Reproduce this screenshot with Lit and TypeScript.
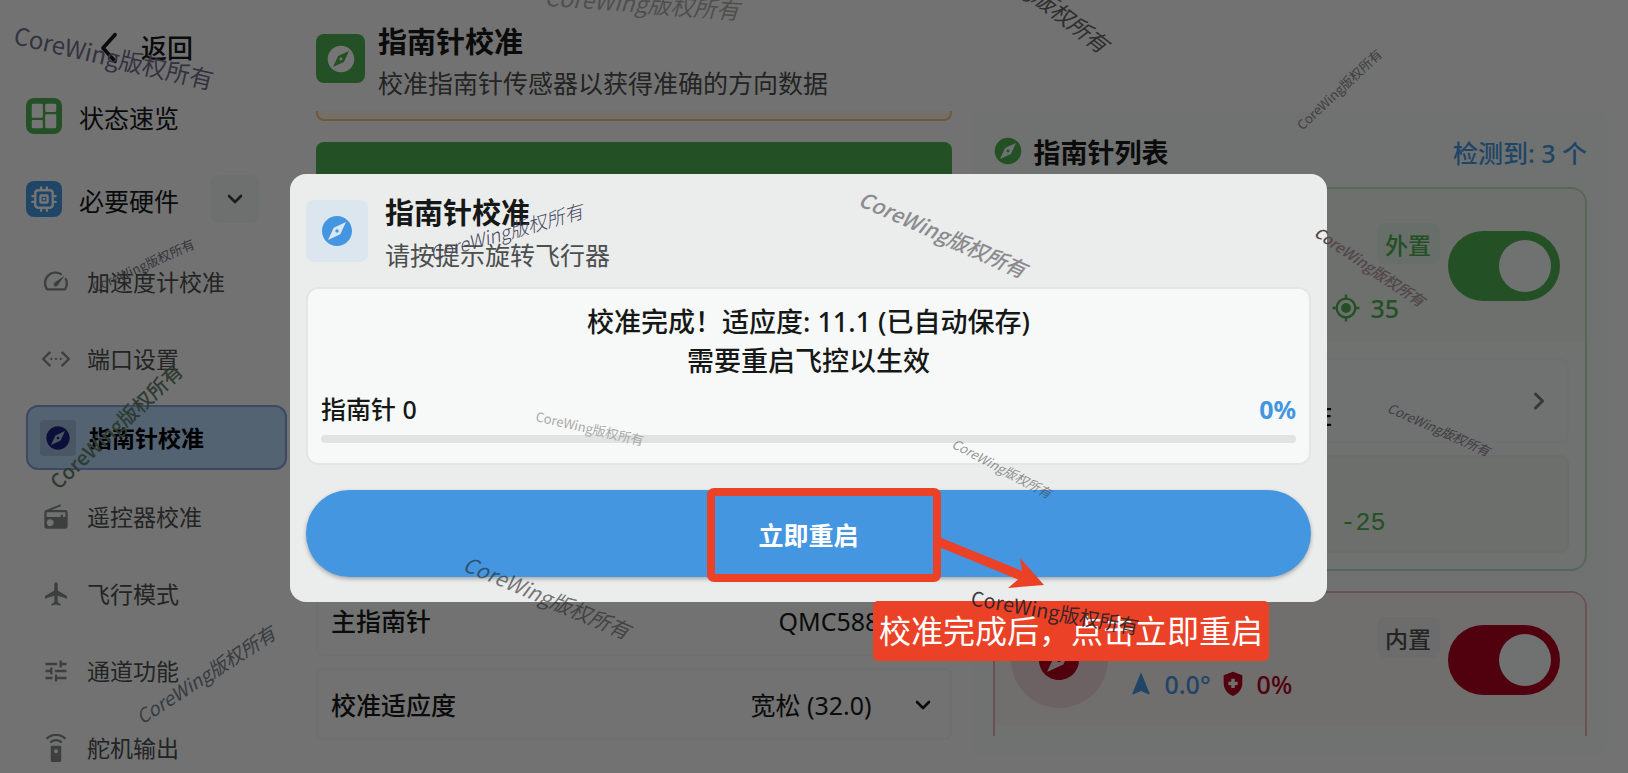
import { LitElement, html, css, svg, nothing } from "lit";
import { customElement } from "lit/decorators.js";
import { styleMap } from "lit/directives/style-map.js";

const glyphs = {
  compass: svg`<path fill-rule="evenodd" d="M12 10.9c-.61 0-1.1.49-1.1 1.1s.49 1.1 1.1 1.1 1.1-.49 1.1-1.1-.49-1.1-1.1-1.1zM12 2C6.48 2 2 6.48 2 12s4.48 10 10 10 10-4.48 10-10S17.52 2 12 2zm2.19 12.19L6 18l3.81-8.19L18 6l-3.81 8.19z"/>`,
  dashboard: svg`<rect x="1.5" y="1.5" width="9.5" height="12" rx="1"/><rect x="1.5" y="15.5" width="9.5" height="7" rx="1"/><rect x="13" y="1.5" width="9.5" height="7" rx="1"/><rect x="13" y="10.5" width="9.5" height="12" rx="1"/>`,
  chip: svg`<g fill="none" stroke="currentColor" stroke-width="2" stroke-linecap="round"><rect x="4.5" y="4.5" width="15" height="15" rx="2.5"/><rect x="9" y="9" width="6" height="6" rx=".5"/><path d="M9.5 4V2M14.5 4V2M9.5 22v-2M14.5 22v-2M4 9.500H2M4 14.500H2M22 9.500h-2M22 14.500h-2"/></g><rect x="11" y="11" width="2" height="2"/>`,
  gauge: svg`<g fill="none" stroke="currentColor" stroke-width="2" stroke-linecap="round" stroke-linejoin="round"><path d="M16.200 5.200A9 9 0 0 0 3.900 17.600c.3.500.6.700 1.100.7h14c.5 0 .8-.2 1.100-.7a9 9 0 0 0 .3-8.100"/></g><path d="M19.500 6.500l-6 8.500c-.8 1.200-2.300 1.100-3 .4s-.8-2.200.4-3z"/>`,
  ports: svg`<g fill="none" stroke="currentColor" stroke-width="2" stroke-linecap="round" stroke-linejoin="round"><path d="M6.500 6.500L1 12l5.500 5.500M17.500 6.500L23 12l-5.500 5.500"/></g><circle cx="8" cy="12" r="1"/><circle cx="12" cy="12" r="1"/><circle cx="16" cy="12" r="1"/>`,
  radio: svg`<path fill-rule="evenodd" d="M3.240 6.150C2.510 6.430 2 7.170 2 8v12c0 1.100.89 2 2 2h16c1.110 0 2-.9 2-2V8c0-1.110-.89-2-2-2H8.300l8.260-3.340L15.880 1 3.240 6.150zM7 20c-1.660 0-3-1.340-3-3s1.340-3 3-3 3 1.340 3 3-1.340 3-3 3zm13-8h-2v-2h-2v2H4V8h16v4z"/>`,
  plane: svg`<path d="M21.500 16v-1.500a1 1 0 0 0-.5-.9L13.500 9V3.500a1.500 1.500 0 0 0-3 0V9L3 13.600a1 1 0 0 0-.5.9V16l8-2.500V19l-2.300 1.500V22l3.800-1 3.800 1v-1.500L13.500 19v-5.500z"/>`,
  tune: svg`<path d="M3 17v2h6v-2H3zM3 5v2h10V5H3zm10 16v-2h8v-2h-8v-2h-2v6h2zM7 9v2H3v2h4v2h2V9H7zm14 4v-2H11v2h10zm-6-4h2V7h4V5h-4V3h-2v6z"/>`,
  remote: svg`<path fill-rule="evenodd" d="M15.500 10h-7c-.55 0-1 .45-1 1v12c0 .55.45 1 1 1h7c.55 0 1-.45 1-1V11c0-.55-.45-1-1-1zM12 16.500a1.700 1.700 0 1 1 0-3.400 1.700 1.700 0 0 1 0 3.400z"/><g fill="none" stroke="currentColor" stroke-width="2" stroke-linecap="round"><path d="M4.500 3.500C8.500-.2 15.500-.2 19.500 3.500M7.800 6.800c2.200-2.100 6.200-2.100 8.400 0"/></g>`,
  down: svg`<path d="M6 9l6 6 6-6" fill="none" stroke="currentColor" stroke-width="2.600" stroke-linecap="round" stroke-linejoin="round"/>`,
  right: svg`<path d="M9 6l6 6-6 6" fill="none" stroke="currentColor" stroke-width="2.600" stroke-linecap="round" stroke-linejoin="round"/>`,
  back: svg`<path d="M16.500 2L7.500 12l9 10" fill="none" stroke="currentColor" stroke-width="2.800" stroke-linecap="round" stroke-linejoin="round"/>`,
  target: svg`<g fill="none" stroke="currentColor" stroke-width="2"><circle cx="12" cy="12" r="8"/><path d="M12 0.500v3.500M12 20v3.500M.5 12H4M20 12h3.500"/></g><circle cx="12" cy="12" r="4.200"/>`,
  heading: svg`<path d="M12 2L4.500 20.290l.71.71L12 18l6.790 3 .71-.71z"/>`,
  shield: svg`<path fill-rule="evenodd" d="M12 1.500L4 4.500v6.500c0 5.300 3.400 9.900 8 11.200 4.600-1.300 8-5.900 8-11.200V4.500L12 1.500zM10.500 7.500h3V10H16v3h-2.500v2.500h-3V13H8v-3h2.500z"/>`,
};

const icon = (name: keyof typeof glyphs, cls: string) => html`
  <svg class="icon ${cls}" viewBox="0 0 24 24" fill="currentColor" aria-hidden="true">${glyphs[name]}</svg>`;

const subItems: { label: string; glyph: keyof typeof glyphs; active?: boolean }[] = [
  { label: "加速度计校准", glyph: "gauge" },
  { label: "端口设置", glyph: "ports" },
  { label: "指南针校准", glyph: "compass", active: true },
  { label: "遥控器校准", glyph: "radio" },
  { label: "飞行模式", glyph: "plane" },
  { label: "通道功能", glyph: "tune" },
  { label: "舵机输出", glyph: "remote" },
];

/* Copyright stamps scattered over the page: centre, angle, size, ink. */
const stamps = [
  { x: 114, y: 57, a: 13, s: 24, c: "#33333f", i: false, w: 400 },
  { x: 642, y: 3, a: 4, s: 23, c: "#4f4f4f", i: true, w: 400 },
  { x: 1033, y: -11, a: 38, s: 22, c: "#2e2e2e", i: true, w: 400 },
  { x: 1339, y: 89, a: -43, s: 13, c: "#3f3f3f", i: false, w: 400 },
  { x: 143, y: 265, a: -24, s: 13, c: "#35353b", i: false, w: 400 },
  { x: 116, y: 426, a: -43, s: 20, c: "#2e3b31", i: false, w: 500 },
  { x: 205, y: 674, a: -33, s: 19, c: "#363c40", i: true, w: 400 },
  { x: 506, y: 231, a: -16, s: 19, c: "#45455c", i: true, w: 300 },
  { x: 943, y: 234, a: 24, s: 21, c: "#8b8b8f", i: true, w: 500 },
  { x: 1370, y: 266, a: 34, s: 15, c: "#52464b", i: true, w: 500 },
  { x: 1439, y: 429, a: 24, s: 13, c: "#403c42", i: true, w: 400 },
  { x: 590, y: 428, a: 13, s: 13, c: "#a9a9a9", i: false, w: 400 },
  { x: 1002, y: 468, a: 28, s: 13, c: "rgba(60,60,60,.55)", i: true, w: 400 },
  { x: 547, y: 597, a: 23, s: 21, c: "rgba(35,35,35,.6)", i: true, w: 400 },
  { x: 1055, y: 612, a: 10, s: 20, c: "rgba(30,35,40,.9)", i: false, w: 400 },
];

@customElement("app-root")
export class AppRoot extends LitElement {
  static styles = css`
    :host {
      --blue: #4496e0;
      --green: #4caf50;
      --red: #b00020;
      --ink: #161817;
      --muted: #4c4f4e;
      display: block;
      position: relative;
      height: 100vh;
      overflow: hidden;
      background: #f8f9f9;
      color: var(--ink);
      font: 400 25px/36px "Noto Sans", "Noto Sans CJK SC", sans-serif;
    }
    * { box-sizing: border-box; }
    h1, h2, h3, p, ul { margin: 0; padding: 0; }
    ul { list-style: none; }
    button, select { font: inherit; color: inherit; border: 0; background: none; padding: 0; margin: 0; }
    a { color: inherit; text-decoration: none; }
    .icon { display: block; flex: none; }
    .i24 { width: 24px; height: 24px; }
    .i28 { width: 28px; height: 28px; }
    .i32 { width: 32px; height: 32px; }
    .i36 { width: 36px; height: 36px; }
    .i48 { width: 48px; height: 48px; }

    .app { display: grid; grid-template: minmax(0, 1fr) / 289px minmax(0, 1fr); height: 100%; }

    .side { padding: 24px 2px 0 26px; display: flex; flex-direction: column; overflow: hidden; }
    .side > * { flex: none; }
    .back { display: flex; align-items: center; gap: 16px; height: 48px; padding-left: 67px; font-size: 26px; font-weight: 500; }
    .group { display: flex; align-items: center; gap: 17px; height: 48px; margin-top: 20px; }
    .group + .group { margin-top: 35px; }
    .group a { flex: 1; padding-top: 4px; }
    .tile { display: grid; place-items: center; flex: none; width: 36px; height: 36px; border-radius: 8px; color: #fff; }
    .tile.green { background: var(--green); }
    .tile.blue { background: var(--blue); }
    .fold { display: grid; place-items: center; width: 49px; height: 48px; margin-right: 28px; border-radius: 8px; background: #f0f1f1; color: #3c3f3e; }
    .subs { display: flex; flex-direction: column; gap: 16px; margin-top: 28px; }
    .sub { display: flex; align-items: center; gap: 17px; height: 61px; padding-left: 16px; font-size: 23px; color: var(--muted); }
    .sub .icon { color: #868988; }
    .sub.active { height: 65px; padding-left: 12px; gap: 13px; border: 2px solid #7ea2d6; border-radius: 12px; background: #b5d7f8; color: #000; font-weight: 700; }
    .sub.active .tile { border-radius: 4px; background: #a3bbd9; }
    .sub.active .icon { color: #1a237e; }

    .main { display: flex; flex-direction: column; min-width: 0; min-height: 0; padding: 0 21px 0 27px; }
    .head { display: flex; gap: 13px; height: 111px; padding-top: 23px; flex: none; }
    .head .tile { width: 49px; height: 49px; margin-top: 11px; }
    h1, h2 { font-size: 29px; line-height: 38px; font-weight: 700; }
    .lead { color: var(--muted); line-height: 44px; }
    .cols { flex: 1; min-height: 0; display: grid; grid-template: minmax(0, 1fr) / 1fr 1fr; gap: 20px; }

    .left { display: flex; flex-direction: column; justify-content: space-between; padding-bottom: 33px; }
    .notice { height: 10px; border: 2px solid #f3c37f; border-top: 0; border-radius: 0 0 8px 8px; background: #fdf1e0; }
    .start { width: 100%; height: 84px; margin-top: 21px; border-radius: 8px; background: var(--green); color: #fff; display: block; }
    .fields { display: flex; flex-direction: column; gap: 12px; }
    .field { display: flex; align-items: center; justify-content: space-between; height: 72px; padding: 2px 0 0 13px; border: 2px solid #f1f2f2; border-radius: 8px; position: relative; }
    .field label { font-weight: 500; }
    .field select { appearance: none; height: 44px; padding-right: 77px; }
    .field select.model { padding-right: 42px; }
    .field .icon { position: absolute; right: 15px; pointer-events: none; }

    .panel { display: flex; flex-direction: column; min-height: 0; margin-bottom: 17px; padding: 0 20px 20px 21px; border-radius: 10px; background: #f5f6f6; }
    .bar { display: flex; align-items: center; gap: 10px; height: 76px; padding-top: 7px; flex: none; }
    .bar .icon { color: var(--green); margin-left: -1px; margin-top: -4px; }
    h3 { flex: 1; font-size: 27px; font-weight: 700; }
    .found { color: var(--blue); font-weight: 500; }
    .cards { flex: 1; min-height: 0; overflow: hidden; display: flex; flex-direction: column; gap: 20px; }
    .card { flex: none; height: 384px; border: 2px solid; border-radius: 16px; overflow: hidden; }
    .card.ok { border-color: #c0dfc2; color: var(--green); }
    .card.bad { border-color: #e3b3bc; color: var(--red); }
    .unit { display: flex; align-items: center; gap: 8px; padding: 0 25px 0 16px; }
    .ok .unit { height: 153px; background: #edf3ed; }
    .bad .unit { height: 133px; background: #f7efef; }
    .avatar { display: grid; place-items: center; flex: none; width: 97px; height: 97px; margin-right: 11px; border-radius: 50%; background: #ecd5d8; }
    .info { flex: 1; align-self: flex-start; display: flex; flex-direction: column; padding-top: 24px; gap: 12px; }
    .ok .info { padding-top: 34px; gap: 30px; }
    .badge { align-self: flex-end; height: 41px; padding: 0 9px 0 8px; border-radius: 8px; font-size: 23px; line-height: 44px; font-weight: 500; }
    .ok .badge { color: var(--green); background: #e3efe4; }
    .bad .badge { background: #ebebeb; color: var(--muted); }
    .stats { display: flex; align-items: center; height: 28px; gap: 10px; font-weight: 500; }
    .stats .blue { color: var(--blue); }
    .stats .gap { margin-left: -2px; }
    .ok .stats { justify-content: flex-end; padding-right: 41px; }
    .switch { appearance: none; display: flex; align-items: center; justify-content: flex-end; flex: none; width: 112px; height: 70px; margin: 0; padding-right: 9px; border-radius: 35px; background: var(--green); }
    .bad .switch { background: var(--red); }
    .switch::before { content: ""; width: 52px; height: 52px; border-radius: 50%; background: #f5f6f6; }
    .rows { display: flex; flex-direction: column; gap: 12px; padding: 16px 16px 0; }
    .row { display: flex; align-items: center; justify-content: space-between; height: 85px; padding: 0 14px 0 306px; border: 2px solid #f0f1f1; border-radius: 8px; color: #777a79; }
    .row b { padding-top: 30px; color: #000; font-weight: 500; }
    .row.value { height: 98px; padding-top: 40px; background: #ecf2ec; border-color: #e8efe8; color: var(--green); font-family: "Liberation Mono", monospace; }
    .row.value span { margin-left: 22px; }

    .scrim { position: absolute; inset: 0; background: rgba(0, 0, 0, .54); display: grid; align-items: start; padding: 174px 301px 0 290px; }
    .dialog { padding: 26px 16px 25px; border-radius: 16px; background: #ebedec; }
    .top { display: flex; gap: 17px; height: 87px; }
    .top .tile { width: 62px; height: 62px; background: #dbe6ee; color: var(--blue); }
    .top h2, .top .lead { line-height: 42px; }
    .words { margin-top: -8px; }
    .result { height: 178px; padding: 13px 13px 0; border: 2px solid #e4e6e5; border-radius: 12px; background: #f7f9f8; }
    .done { text-align: center; font-size: 27px; line-height: 39px; font-weight: 500; }
    .progress { display: flex; justify-content: space-between; margin-top: 11px; padding-bottom: 8px; line-height: 36px; font-weight: 500; }
    .progress b { color: var(--blue); font-weight: 700; }
    .track { appearance: none; display: block; width: 100%; height: 8px; border: 0; border-radius: 4px; background: #e1e3e2; overflow: hidden; }
    .track::-webkit-progress-bar { background: #e1e3e2; }
    .track::-webkit-progress-value { background: var(--blue); }
    .restart { display: block; width: 100%; height: 87px; margin-top: 25px; padding-top: 2px; border-radius: 44px; background: var(--blue); color: #fff; font-weight: 700; box-shadow: 0 2px 4px rgba(0, 0, 0, .3); }

    .frame { position: absolute; left: 707px; top: 488px; width: 234px; height: 94px; border: 8px solid #eb4127; border-radius: 7px; pointer-events: none; }
    .arrow { position: absolute; left: 936px; top: 530px; width: 110px; height: 62px; pointer-events: none; }
    .tip { position: absolute; left: 873px; top: 601px; padding: 6px; border-radius: 5px; background: #eb4127; color: #fff; font-size: 32px; line-height: 48px; white-space: nowrap; }
    .stamp { position: absolute; transform-origin: center; white-space: nowrap; line-height: 1; font-family: "Noto Sans CJK SC", sans-serif; pointer-events: none; }
  `;

  render() {
    return html`
      <div class="app">
        <nav class="side">
          <button class="back">${icon("back", "i32")}<span>返回</span></button>
          <div class="group"><span class="tile green">${icon("dashboard", "i28")}</span><a href="#status">状态速览</a></div>
          <div class="group">
            <span class="tile blue">${icon("chip", "i28")}</span><a href="#hardware">必要硬件</a>
            <button class="fold" aria-label="收起">${icon("down", "i24")}</button>
          </div>
          <ul class="subs">
            ${subItems.map((s) => html`<li><a class="sub ${s.active ? "active" : ""}" href="#sub">
              ${s.active ? html`<span class="tile">${icon(s.glyph, "i28")}</span>` : icon(s.glyph, "i28")}
              <span>${s.label}</span></a></li>`)}
          </ul>
        </nav>
        <main class="main">
          <header class="head">
            <span class="tile green">${icon("compass", "i32")}</span>
            <div><h1>指南针校准</h1><p class="lead">校准指南针传感器以获得准确的方向数据</p></div>
          </header>
          <div class="cols">
            <section class="left">
              <div><div class="notice"></div><button class="start" aria-label="开始校准"></button></div>
              <div class="fields">
                <div class="field"><label for="model">主指南针</label>
                  <select id="model" class="model"><option>QMC5883L</option></select>${icon("down", "i24")}</div>
                <div class="field"><label for="fit">校准适应度</label>
                  <select id="fit"><option>宽松 (32.0)</option></select>${icon("down", "i24")}</div>
              </div>
            </section>
            <section class="panel">
              <div class="bar">${icon("compass", "i32")}<h3>指南针列表</h3><span class="found">检测到: 3 个</span></div>
              <div class="cards">
                ${this.card(true)}
                ${this.card(false)}
              </div>
            </section>
          </div>
        </main>
      </div>

      <div class="scrim">
        <section class="dialog" role="dialog" aria-labelledby="dlg">
          <div class="top">
            <span class="tile">${icon("compass", "i36")}</span>
            <div class="words"><h2 id="dlg">指南针校准</h2><p class="lead">请按提示旋转飞行器</p></div>
          </div>
          <div class="result">
            <p class="done">校准完成！适应度: 11.1 (已自动保存)<br />需要重启飞控以生效</p>
            <div class="progress"><label for="p0">指南针 0</label><b>0%</b></div>
            <progress class="track" id="p0" value="0" max="100"></progress>
          </div>
          <button class="restart">立即重启</button>
        </section>
      </div>

      <div class="frame"></div>
      <svg class="arrow" viewBox="0 0 110 62" aria-hidden="true">
        <path fill="#eb4127" d="M3 7L86 41 84 28 108 55 72 58 82 49.500 3 17z" />
      </svg>
      <div class="tip">校准完成后，点击立即重启</div>

      ${stamps.map((m) => html`<span class="stamp" style=${styleMap({
        left: `${m.x}px`, top: `${m.y}px`, color: m.c, fontSize: `${m.s}px`, fontWeight: `${m.w}`,
        fontStyle: m.i ? "italic" : "normal", transform: `translate(-50%, -50%) rotate(${m.a}deg)`,
      })}>CoreWing版权所有</span>`)}
    `;
  }

  private card(external: boolean) {
    return html`
      <article class="card ${external ? "ok" : "bad"}">
        <div class="unit">
          ${external ? nothing : html`<span class="avatar">${icon("compass", "i48")}</span>`}
          <div class="info">
            <span class="badge">${external ? "外置" : "内置"}</span>
            ${external
              ? html`<div class="stats">${icon("target", "i28")}<span>35</span></div>`
              : html`<div class="stats"><span class="blue">${icon("heading", "i28")}</span><span class="blue">0.0°</span><span class="gap">${icon("shield", "i28")}</span><span>0%</span></div>`}
          </div>
          <input class="switch" type="checkbox" checked aria-label=${external ? "外置" : "内置"} />
        </div>
        ${external ? html`<div class="rows">
          <div class="row"><b>E</b>${icon("right", "i28")}</div>
          <div class="row value"><span>-25</span></div>
        </div>` : nothing}
      </article>`;
  }
}
